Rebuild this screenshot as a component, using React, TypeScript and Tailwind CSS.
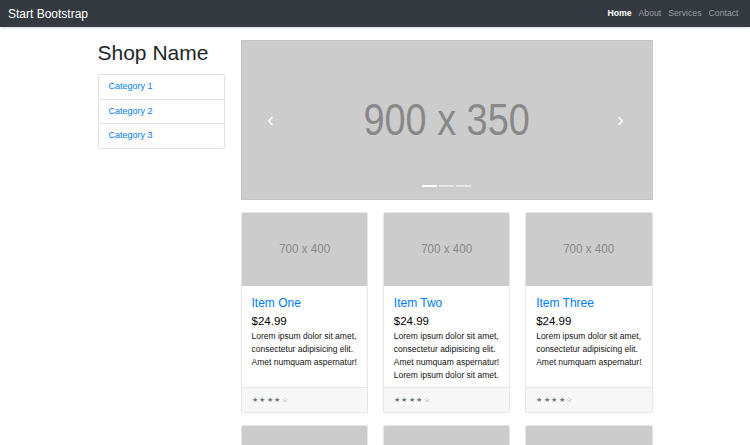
import React from 'react';

const items = [
  { title: 'Item One', text: 'Lorem ipsum dolor sit amet, consectetur adipisicing elit. Amet numquam aspernatur!' },
  { title: 'Item Two', text: 'Lorem ipsum dolor sit amet, consectetur adipisicing elit. Amet numquam aspernatur! Lorem ipsum dolor sit amet.' },
  { title: 'Item Three', text: 'Lorem ipsum dolor sit amet, consectetur adipisicing elit. Amet numquam aspernatur!' },
];

const Chevron = ({ dir }: { dir: 'left' | 'right' }) => (
  <svg width="7" height="10" viewBox="0 0 7 10" className="text-white opacity-90">
    <path
      d={dir === 'left' ? 'M5.5 1 L1.8 5 L5.5 9' : 'M1.5 1 L5.2 5 L1.5 9'}
      fill="none"
      stroke="currentColor"
      strokeWidth="1.8"
    />
  </svg>
);

export default function App() {
  return (
    <div className="h-[445px] overflow-hidden bg-white font-['Liberation_Sans',Arial,sans-serif] text-[#212529]">
      <nav className="h-[27px] bg-[#343a40] flex items-center justify-between pl-[8px] pr-[8px] shadow-sm">
        <span className="text-white text-[12px]">Start Bootstrap</span>
        <ul className="flex text-[8.7px]">
          <li className="px-[3.5px] text-white font-bold">Home</li>
          <li className="px-[3.5px] text-[#9a9da0]">About</li>
          <li className="px-[3.5px] text-[#9a9da0]">Services</li>
          <li className="px-[3.5px] text-[#9a9da0]">Contact</li>
        </ul>
      </nav>

      <div className="w-[555px] mx-auto flex gap-[16px] pt-[13px]">
        <aside className="w-[127px] shrink-0">
          <h1 className="text-[21px] leading-[24px] mt-[1px] mb-[9px] text-[#212529]">Shop Name</h1>
          <div className="border border-[#e3e3e3] rounded-[2px] text-[9px] text-[#007bff]">
            <div className="h-[24.5px] flex items-center px-[10px] border-b border-[#e3e3e3]">Category 1</div>
            <div className="h-[24.5px] flex items-center px-[10px] border-b border-[#e3e3e3]">Category 2</div>
            <div className="h-[24px] flex items-center px-[10px]">Category 3</div>
          </div>
        </aside>

        <main className="flex-1">
          <div className="relative h-[160px] bg-[#cccccc] border border-[#c4c4c4] flex items-center justify-center">
            <span className="text-[#888888] text-[44px] scale-x-[0.86] inline-block">900 x 350</span>
            <div className="absolute left-[25px] top-[75px]">
              <Chevron dir="left" />
            </div>
            <div className="absolute right-[28px] top-[75px]">
              <Chevron dir="right" />
            </div>
            <div className="absolute bottom-[12px] left-0 right-0 flex justify-center gap-[2px]">
              <span className="w-[15px] h-[2px] bg-white" />
              <span className="w-[15px] h-[2px] bg-white/50" />
              <span className="w-[15px] h-[2px] bg-white/50" />
            </div>
          </div>

          <div className="grid grid-cols-3 gap-x-[15px] gap-y-[12px] mt-[12px]">
            {items.map((item) => (
              <div key={item.title} className="border border-[#e5e5e5] rounded-[2px] flex flex-col overflow-hidden">
                <div className="h-[73px] bg-[#cccccc] flex items-center justify-center text-[#888888] text-[13.5px]">
                  <span className="inline-block scale-x-[0.86]">700 x 400</span>
                </div>
                <div className="flex-1 pl-[10px] pr-[6px] pt-[10px] pb-[5px]">
                  <h4 className="text-[12px] leading-[14px] text-[#007bff]">{item.title}</h4>
                  <h5 className="text-[11.5px] leading-[14px] mt-[4px] mb-[2px] text-black">$24.99</h5>
                  <p className="text-[8.5px] leading-[13px] text-[#111111]">{item.text}</p>
                </div>
                <div className="h-[25px] bg-[#f7f7f7] border-t border-[#e5e5e5] flex items-center px-[10px] text-[6.5px] tracking-[1.5px] text-[#6c757d]">
                  &#9733;&#9733;&#9733;&#9733;&#9734;
                </div>
              </div>
            ))}
            {[0, 1, 2].map((i) => (
              <div key={i} className="border border-[#e5e5e5] rounded-[2px] overflow-hidden">
                <div className="h-[73px] bg-[#cccccc]" />
              </div>
            ))}
          </div>
        </main>
      </div>
    </div>
  );
}
